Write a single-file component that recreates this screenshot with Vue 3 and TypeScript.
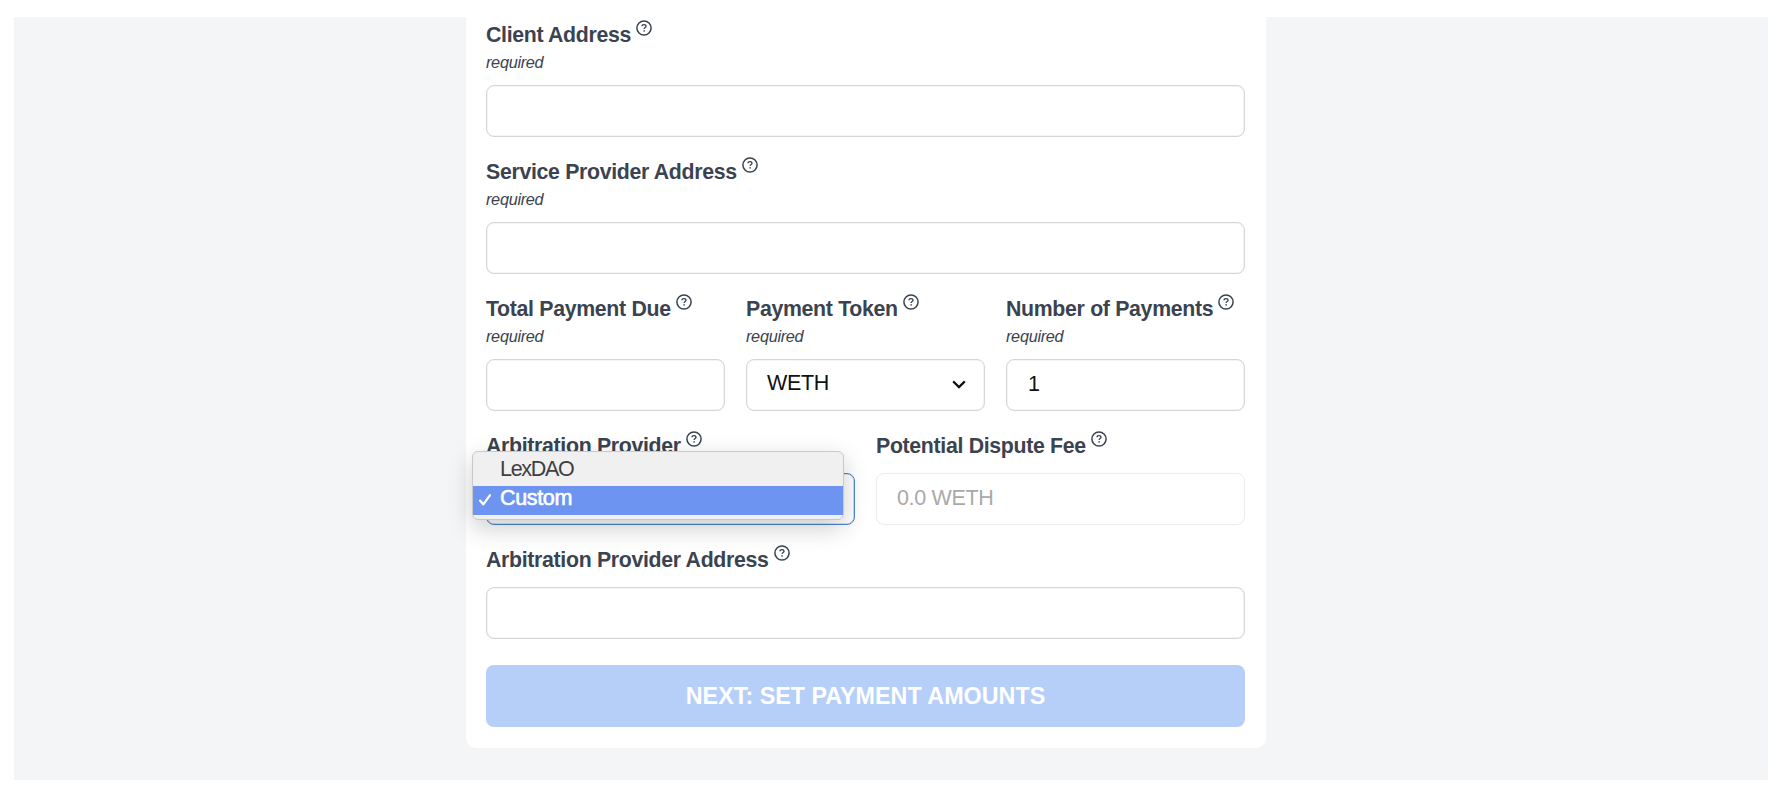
<script setup lang="ts">
interface Field {
  id: string
  label: string
  required?: boolean
  kind: 'text' | 'select' | 'disabled' | 'open'
  value?: string
}

const rows: Field[][] = [
  [{ id: 'client', label: 'Client Address', required: true, kind: 'text' }],
  [{ id: 'provider', label: 'Service Provider Address', required: true, kind: 'text' }],
  [
    { id: 'total', label: 'Total Payment Due', required: true, kind: 'text' },
    { id: 'token', label: 'Payment Token', required: true, kind: 'select', value: 'WETH' },
    { id: 'count', label: 'Number of Payments', required: true, kind: 'text', value: '1' },
  ],
  [
    { id: 'arbiter', label: 'Arbitration Provider', kind: 'open' },
    { id: 'fee', label: 'Potential Dispute Fee', kind: 'disabled', value: '0.0 WETH' },
  ],
  [{ id: 'arbiter-address', label: 'Arbitration Provider Address', kind: 'text' }],
]

const options = ['LexDAO', 'Custom']
const selected = 'Custom'
</script>

<template>
  <main class="page">
    <form class="card" @submit.prevent>
      <div v-for="(row, i) in rows" :key="i" class="row">
        <div v-for="f in row" :key="f.id" class="field">
          <div class="label">
            <span class="label-text">{{ f.label }}</span>
            <svg class="help" viewBox="0 0 16 16" fill="none" stroke="currentColor">
              <circle cx="8" cy="8" r="7.1" stroke-width="1.5" />
              <path d="M6 6.3C6 5.2 6.9 4.6 8 4.6s2 .6 2 1.7c0 1.2-1.9 1.3-1.9 2.7" stroke-width="1.3" />
              <circle cx="8.1" cy="10.9" r=".8" fill="currentColor" stroke="none" />
            </svg>
          </div>
          <div v-if="f.required" class="required">required</div>
          <div :class="['control', f.kind, { plain: !f.required }]">
            <span class="value">{{ f.value }}</span>
            <svg v-if="f.kind === 'select'" class="chevron" viewBox="0 0 14 9" fill="none" stroke="currentColor">
              <path d="M1.2 1.4 7 7.1l5.8-5.7" stroke-width="2.2" />
            </svg>
            <div v-if="f.kind === 'open'" class="menu">
              <div v-for="o in options" :key="o" :class="['option', { active: o === selected }]">
                <svg v-if="o === selected" class="check" viewBox="0 0 12 12" fill="none" stroke="currentColor">
                  <path d="M1 6.6 4.4 10.4 11 1.2" stroke-width="2.3" stroke-linecap="round" stroke-linejoin="round" />
                </svg>
                <span>{{ o }}</span>
              </div>
            </div>
          </div>
        </div>
      </div>
      <button class="next" type="submit"><span>NEXT: SET PAYMENT AMOUNTS</span></button>
    </form>
  </main>
</template>

<style>
body {
  background: #fff;
}
</style>

<style scoped>
.page {
  box-sizing: border-box;
  width: 1754px;
  height: 763px;
  margin: 17px 0 0 14px;
  padding-left: 452px;
  background: #f4f5f7;
  font-family: "Liberation Sans", Arial, sans-serif;
  color: #3a434f;
}
.card {
  box-sizing: border-box;
  width: 800px;
  height: 731px;
  padding: 0 21px 21px 20px;
  background: #fff;
  border-radius: 0 0 10px 10px;
}
.row {
  display: flex;
  gap: 21px;
  margin-bottom: 17px;
}
.field {
  flex: 1 1 0;
  min-width: 0;
}
.label {
  display: flex;
  align-items: flex-start;
  height: 36px;
}
.label-text {
  font-size: 21.3px;
  font-weight: 700;
  line-height: 36px;
  letter-spacing: -0.32px;
  white-space: nowrap;
}
.help {
  width: 16px;
  height: 16px;
  margin: 3px 0 0 5px;
  flex: none;
}
.required {
  font-size: 16.3px;
  font-style: italic;
  line-height: 19px;
  letter-spacing: -0.3px;
}
.control {
  position: relative;
  box-sizing: border-box;
  display: flex;
  align-items: center;
  justify-content: space-between;
  height: 52px;
  margin-top: 13px;
  padding: 0 18px 2px 20px;
  border: 1px solid #d6d6d6;
  box-shadow: inset 0 0 0 0.6px #ececec;
  border-radius: 8px;
  font-size: 21.5px;
  letter-spacing: -0.35px;
  color: #111;
}
.control.text {
  padding-left: 21px;
}
.control.plain {
  margin-top: 9px;
}
.control.select .value {
  position: relative;
  top: -1px;
}
.control.disabled {
  border-color: #ececec;
  box-shadow: none;
  color: #a9a9a9;
}
.control.open {
  border-color: #4f86d0;
  box-shadow: inset 0 0 0 0.6px #a9c6ec;
}
.chevron {
  width: 14px;
  height: 9px;
}
.menu {
  position: absolute;
  z-index: 1;
  top: -23px;
  left: -15px;
  box-sizing: border-box;
  width: 372px;
  height: 69px;
  padding-top: 5px;
  border: 1px solid #c9c9c9;
  border-radius: 6px;
  background: #f0f0f0;
  box-shadow: 0 8px 24px rgba(0, 0, 0, 0.2);
  color: #3f3f3f;
}
.option {
  display: flex;
  align-items: flex-start;
  height: 29px;
  padding-left: 27px;
  line-height: 25px;
  letter-spacing: -1.3px;
}
.option.active {
  padding-left: 6px;
  background: #6c94f0;
  color: #fff;
  letter-spacing: -0.35px;
  -webkit-text-stroke: 0.6px #fff;
}
.check {
  width: 12px;
  height: 12px;
  margin: 8px 9px 0 0;
}
.next {
  display: block;
  width: 100%;
  height: 62px;
  margin-top: 26px;
  padding: 0;
  border: 0;
  border-radius: 8px;
  background: #b6cff9;
  color: #fff;
  font: 700 23.3px/61px "Liberation Sans", Arial, sans-serif;
  letter-spacing: 0.02px;
}
</style>
